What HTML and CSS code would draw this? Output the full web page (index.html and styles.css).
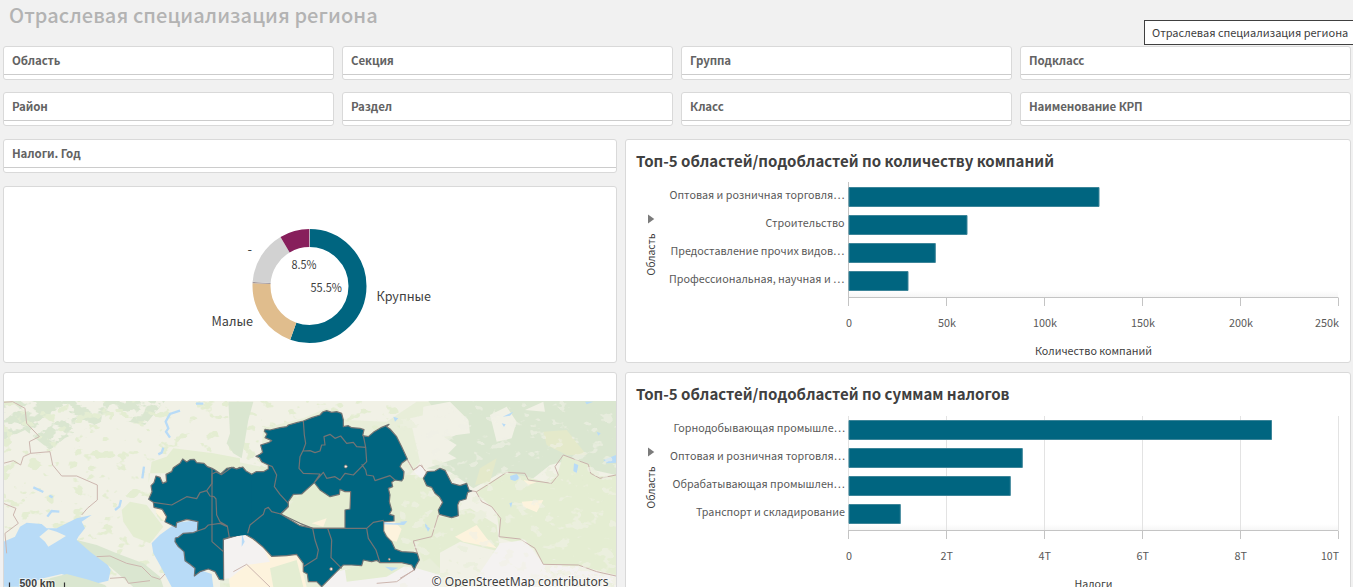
FILE: index.html
```html
<!DOCTYPE html>
<html lang="ru">
<head>
<meta charset="utf-8">
<title>Отраслевая специализация региона</title>
<link rel="stylesheet" href="styles.css">
</head>
<body>
<header class="sheet-header"><h1 class="sheet-title">Отраслевая специализация региона</h1></header>
<div class="tooltip">Отраслевая специализация региона</div>
<main class="sheet">
  <section class="filters">
    <div class="filter"><span class="filter-name">Область</span></div>
    <div class="filter"><span class="filter-name">Секция</span></div>
    <div class="filter"><span class="filter-name">Группа</span></div>
    <div class="filter"><span class="filter-name">Подкласс</span></div>
    <div class="filter"><span class="filter-name">Район</span></div>
    <div class="filter"><span class="filter-name">Раздел</span></div>
    <div class="filter"><span class="filter-name">Класс</span></div>
    <div class="filter"><span class="filter-name">Наименование КРП</span></div>
  </section>
  <section class="board">
    <div class="column-left">
      <div class="filter"><span class="filter-name">Налоги. Год</span></div>
      <div class="card donut-card">
        <svg class="chart" viewBox="4 187 612 175" width="612" height="175">
          <g fill="none" stroke-width="18">
            <circle cx="309.5" cy="286" r="48" stroke="#006580" pathLength="100" stroke-dasharray="55.5 44.5" transform="rotate(-90 309.5 286)"/>
            <circle cx="309.5" cy="286" r="48" stroke="#e0bd8d" pathLength="100" stroke-dasharray="20.3 79.7" stroke-dashoffset="-55.5" transform="rotate(-90 309.5 286)"/>
            <circle cx="309.5" cy="286" r="48" stroke="#a3989b" pathLength="100" stroke-dasharray=".4 99.6" stroke-dashoffset="-75.8" transform="rotate(-90 309.5 286)"/>
            <circle cx="309.5" cy="286" r="48" stroke="#d2d2d2" pathLength="100" stroke-dasharray="15.3 84.7" stroke-dashoffset="-76.2" transform="rotate(-90 309.5 286)"/>
            <circle cx="309.5" cy="286" r="48" stroke="#871f5c" pathLength="100" stroke-dasharray="8.5 91.5" stroke-dashoffset="-91.5" transform="rotate(-90 309.5 286)"/>
          </g>
          <path d="M309.5 229v18" stroke="#d7c9d3" stroke-width=".7"/>
          <g class="slice-value">
            <text x="291.5" y="269" textLength="25" lengthAdjust="spacingAndGlyphs">8.5%</text>
            <text x="310.5" y="292" textLength="31.5" lengthAdjust="spacingAndGlyphs">55.5%</text>
          </g>
          <g class="slice-name">
            <text x="376.5" y="301" textLength="54.5" lengthAdjust="spacingAndGlyphs">Крупные</text>
            <text x="211.5" y="326" textLength="41.5" lengthAdjust="spacingAndGlyphs">Малые</text>
            <text x="247.5" y="254">-</text>
          </g>
        </svg>
      </div>
      <div class="card map-card">
        <svg class="map" viewBox="4 401 612 186" width="612" height="186">
          <defs>
            <filter id="patchy" x="0" y="0" width="100%" height="100%">
              <feTurbulence type="fractalNoise" baseFrequency=".055 .085" numOctaves="4" seed="7"/>
              <feColorMatrix values="0 0 0 0 0 0 0 0 0 0 0 0 0 0 0 16 0 0 0 -7.5"/>
              <feComposite in="SourceGraphic" operator="in"/>
            </filter>
            <filter id="sparse" x="0" y="0" width="100%" height="100%">
              <feTurbulence type="fractalNoise" baseFrequency=".07 .1" numOctaves="3" seed="21"/>
              <feColorMatrix values="0 0 0 0 0 0 0 0 0 0 0 0 0 0 0 16 0 0 0 -9.8"/>
              <feComposite in="SourceGraphic" operator="in"/>
            </filter>
          </defs>
          <rect x="4" y="401" width="612" height="186" fill="#f1f1e6"/>
          <path d="M4 401H165L145 425 110 418 65 438 50 450 25 430 4 440Z" fill="#dae6d0" filter="url(#patchy)"/>
          <path d="M4 401H616V587H4Z" fill="#e4edd2" filter="url(#sparse)"/>
          <g transform="translate(0 370) scale(.33333)">
            <path d="M685 95H760L745 150 735 210 725 265 700 250 680 220 690 190Z" fill="#dae6d0"/>
            <path d="M446 340 455 275 500 260 520 235 640 250 720 265V310H446Z" fill="#e4edd2"/>
            <path d="M365 420 390 395 440 405 490 470 450 520 400 500 370 455Z" fill="#e4edd2"/>
            <path d="M465 412 490 420 503 450 490 452 470 430Z" fill="#fdf3dd"/>
            <path d="M10 515 45 500 60 470 80 458 125 462 140 475 170 475 200 460 230 445 275 435 245 455 255 475 235 500 230 510 270 530 310 560 332 600 325 632 280 643 220 625 185 612 130 625 60 650H10Z" fill="#b8dbf7"/>
            <path d="M118 500 145 478 170 485 198 498 170 515 145 530 135 515Z" fill="#f1f1e6"/>
            <path d="M455 520 480 494 530 458 595 450 595 486 540 500 555 560 600 600 635 612 640 651H515L485 595 460 550Z" fill="#b8dbf7"/>
            <path d="M230 510 290 525 350 550 430 580 480 620 490 651H400L330 590 270 545Z" fill="#dae6d0"/>
            <path d="M150 625 200 612 260 628 315 645 320 651H130Z" fill="#dae6d0"/>
            <path d="M540 122 510 132 497 155 505 175 498 185 510 203M490 233 485 248 475 253M432 290 427 325M363 390 358 410 345 420M100 352 130 366M142 440 155 423 178 425M588 101H610M148 377 158 382" fill="none" stroke="#b8dbf7" stroke-width="7"/>
            <path d="M672 508 720 494 735 580 720 640H660Z" fill="#f4f2f1"/>
            <path d="M10 97 38 95 75 115 80 160 118 200 88 215 92 250 70 260 62 285 40 272 10 280M92 250 150 245 158 285 185 318 230 318 292 345V390L262 415 245 435M10 400 48 415 40 435 55 460 15 490 20 550M290 560 330 558 380 580 425 590 455 620 480 628 495 612M330 625 375 622 385 640 450 632" fill="none" stroke="#ccb6af" stroke-width="3"/>
          </g>
          <g transform="translate(220 395) scale(.33333)">
            <path d="M145 220 110 195 125 160 130 100 250 70 320 40 380 75 500 80 590 20 660 20V50L570 70 600 200 570 240 660 300V576H0V190Z" fill="#e4edd2" opacity=".65"/>
            <path d="M500 275 560 240 660 240V520L600 460 520 470 490 400Z" fill="#e4edd2"/>
            <path d="M180 358 240 300 285 260 395 295 375 400H280Z" fill="#e4edd2"/>
            <path d="M100 425 155 484 235 478 260 576H30L10 430 70 415Z" fill="#fdf3dd"/>
            <path d="M10 430 70 415 130 460 150 500 80 510 30 550 10 552ZM310 576 350 530 430 510 480 505 590 520 660 540V576Z" fill="#f4f2f1"/>
            <path d="M150 520 230 495 250 576H160ZM375 525 450 500 560 510 500 545 380 560Z" fill="#e4edd2"/>
            <path d="M490 380 522 378 545 402 530 440 510 435 492 405ZM275 385 320 370 310 395Z" fill="#fdf3dd"/>
            <path d="M490 382 520 385 560 382 550 390 490 388ZM615 385 630 400 618 405ZM495 515 535 518 515 528ZM66 418 74 440 65 455ZM520 65 535 70 525 80Z" fill="#b8dbf7"/>
            <path d="M560 192 580 225 605 210 620 240M655 360 635 430 580 438 592 475M583 524 530 560 470 565M40 530 80 508 150 576" fill="none" stroke="#ccb6af" stroke-width="3"/>
          </g>
          <g transform="translate(400 395) scale(.33333)">
            <path d="M85 18H648V240L580 225 530 190 450 210 400 250 300 235 220 280 150 230 80 220 170 190 100 150 190 110 120 70Z" fill="#dae6d0"/>
            <path d="M70 35 150 20 205 75 210 115 130 125 170 150 120 200 60 170ZM270 60 320 35 350 80 335 130 290 140ZM375 45 430 20 435 50Z" fill="#f1f1e6"/>
            <path d="M225 290 320 230 440 262 470 245 490 180 570 210 590 245 648 240V540L550 515 430 508 400 460 300 430 290 350Z" fill="#e4edd2"/>
            <path d="M430 110 500 105 560 180 500 180 440 150ZM240 220 290 190 270 260 225 270Z" fill="#e4e9ca"/>
            <path d="M110 370 210 340 290 390 300 470 180 440 70 500 40 430Z" fill="#e4edd2"/>
            <path d="M165 425 230 390 260 430 290 460 190 440ZM370 255 410 262 385 270ZM365 320 430 315 410 352 370 335Z" fill="#fdf3dd"/>
            <path d="M300 470 375 435 430 508 550 515 648 545V576H250Z" fill="#f4f2f1" filter="url(#patchy)"/>
            <path d="M235 540 300 445 375 435 430 510 400 576H250ZM42 230 62 210 85 245 60 248Z" fill="#f4f2f1"/>
            <path d="M330 243 350 237 360 250 345 258 332 254ZM522 205 535 210 530 235 520 228ZM610 195 648 180V203L620 205ZM75 390 90 400 84 410ZM0 380 22 378 12 390ZM90 85 115 70M590 110 602 115 595 122ZM305 85 317 88 312 96ZM328 325 337 322 333 338ZM555 20 580 20 560 28ZM308 65 340 50 330 62ZM348 287 362 292Z" fill="#b8dbf7"/>
            <path d="M20 190 40 225 60 210 80 230M212 287 230 290 270 265 320 232 375 235 385 255 455 265 475 240 465 215 490 180 530 195 565 208 572 235 600 250 648 240M228 290 245 320 275 335 302 370 297 425 360 432 405 460 430 508 535 510 590 530 648 543M115 360 95 425 40 438 52 475M45 524 0 550" fill="none" stroke="#c9b1ab" stroke-width="3"/>
          </g>
          <path d="M400 401H616V587H400Z" fill="#f1f1e6" opacity=".6" filter="url(#sparse)"/>
          <g fill="#006580" stroke="#747474" stroke-width="3.6" stroke-linejoin="round">
            <path transform="translate(0 370) scale(.33333)" stroke="none" d="M660 314 680 295 700 292 708 298 724 292V494L670 508 660 470Z"/>
            <path transform="translate(0 370) scale(.33333)" d="M446 388 456 365 453 347 462 338 468 318 480 322 488 340 500 335 498 313 515 305 520 293 540 280 548 267 560 276 570 269 583 268 590 278 612 280 622 290 636 295 645 300 662 312 680 295 700 292 708 298 720 292V494L670 508 671 630 658 628 645 605 625 597 600 605 583 618 585 595 570 583 555 572 552 545 535 530 525 515 526 504 535 502 550 490 580 488 592 483 594 455 560 448 530 458 528 472 515 465 495 455 500 440 487 418 462 412 460 397Z"/>
            <path transform="translate(220 395) scale(.33333)" fill-rule="evenodd" d="M-24 237-12 231 4 239 20 228 35 217 50 222 68 216 78 228 95 238 108 230 130 230 145 222 145 210 125 200 118 188 108 184 120 178 128 172 122 150 145 143 155 137 135 128 141 117 133 109 135 103 150 105 180 98 200 95 205 90 230 83 250 78 275 68 300 60 308 51 320 47 335 52 350 50 365 55 370 75 370 95 385 92 395 98 420 100 432 104 428 122 445 125 460 112 485 97 507 88 500 95 510 102 530 125 545 155 562 192 545 205 540 215 552 230 550 250 545 258 525 255 515 262 518 275 505 280 510 300 508 320 515 345 508 358 522 362V378L491 380V408L500 425 515 440 525 462 545 470 580 472 592 475 598 495 588 512 583 524 575 510 545 503 480 503 470 496 455 500 430 495 425 512 395 510 370 510 350 530 330 550 305 575 290 560 265 560 262 537 250 530V505L230 478 200 482 155 484 130 457 100 432 70 415 10 432V470L-24 440ZM283 263 300 285 330 305 358 298 360 283 375 290 392 290 390 342 375 345V400H280L240 392 182 357 205 335V320L220 298 245 297Z"/>
            <path transform="translate(400 395) scale(.33333)" d="M70 250 82 230 105 228 120 220 135 226 155 265 180 272 200 265 207 285 215 288 203 292 198 312 178 318 173 330 175 362 155 368 118 358 115 345 128 322 118 305 105 295 95 277 80 272Z"/>
          </g>
          <path transform="translate(0 370) scale(.33333)" fill="#006580" d="M640 330H755V493L692 500 670 470 660 455 650 435Z"/>
          <g fill="none" stroke="#747474" stroke-width="3.6" stroke-linejoin="round">
            <path transform="translate(0 370) scale(.33333)" d="M460 397 515 405 560 380 590 386 600 368 620 362 630 378 642 380 648 387 650 435 660 455 682 468 688 503M636 295V340L620 362M592 483 615 475 625 465 660 460 682 470"/>
            <path transform="translate(220 395) scale(.33333)" d="M250 78 253 120 257 145 250 165 240 185 237 220 250 235 300 237 283 263M250 168 270 167 285 173 300 168 305 150 315 150 312 125 330 118 345 130 362 123 380 145 400 142 410 155 437 157 430 122M437 157 440 200 425 215 400 240 375 235 360 255 345 245 320 250 310 232 283 263M425 208 437 225 440 240 460 243 465 257 510 242 525 255M145 210 157 215 170 240 163 275 180 298 205 325M205 335 182 357 155 350 145 337 135 342 130 358 90 390 83 415M182 357 240 385 278 400H440L460 382 491 376M278 400 285 435 295 465 290 490 250 515M323 400 335 435 333 488 365 520M440 400 445 430 468 465 480 503"/>
          </g>
          <g fill="#f3f3ef" stroke="#877268" stroke-width=".8"><circle cx="345.8" cy="466.5" r="1.5"/><circle cx="331.2" cy="569" r="1.5"/><circle cx="389.3" cy="559.3" r="1"/></g>
          <path d="M9.5 582.5V587M64.5 582.5V587" stroke="#333" stroke-width="1.2"/>
          <g class="map-note">
            <text class="map-scale" x="19.5" y="587" textLength="35.5" lengthAdjust="spacingAndGlyphs">500 km</text>
            <text x="431.5" y="586" textLength="177" lengthAdjust="spacingAndGlyphs">© OpenStreetMap contributors</text>
          </g>
        </svg>
      </div>
    </div>
    <div class="column-right">
      <div class="card">
        <svg class="chart" viewBox="626 140 724 222" width="724" height="222">
          <defs><linearGradient id="fade" x2="0" y2="1"><stop stop-color="#fff"/><stop offset="1" stop-color="#f6f6f6"/></linearGradient></defs>
          <text class="chart-title" x="636" y="167" textLength="418" lengthAdjust="spacingAndGlyphs">Топ-5 областей/подобластей по количеству компаний</text>
          <rect x="849" y="291" width="489" height="6" fill="url(#fade)"/>
          <path class="axis" d="M848.5 182V306M848 297.5H1338.5M946.5 298V306M1044.5 298V306M1142.5 298V306M1240.5 298V306M1338.5 298V306"/>
          <path class="bar" d="M849 187.5h250v19h-250zM849 215.5h118v19h-118zM849 243.5h86.3v19h-86.3zM849 271.5h59v19h-59z"/>
          <g class="label">
            <text x="669.5" y="199" textLength="175" lengthAdjust="spacingAndGlyphs">Оптовая и розничная торговля…</text>
            <text x="765.5" y="227" textLength="79" lengthAdjust="spacingAndGlyphs">Строительство</text>
            <text x="670.5" y="255" textLength="174" lengthAdjust="spacingAndGlyphs">Предоставление прочих видов…</text>
            <text x="669" y="283" textLength="175.5" lengthAdjust="spacingAndGlyphs">Профессиональная, научная и …</text>
            <text x="846" y="327" textLength="6" lengthAdjust="spacingAndGlyphs">0</text>
            <text x="938" y="327" textLength="18" lengthAdjust="spacingAndGlyphs">50k</text>
            <text x="1033" y="327" textLength="24" lengthAdjust="spacingAndGlyphs">100k</text>
            <text x="1131" y="327" textLength="24" lengthAdjust="spacingAndGlyphs">150k</text>
            <text x="1229" y="327" textLength="24" lengthAdjust="spacingAndGlyphs">200k</text>
            <text x="1315" y="327" textLength="24" lengthAdjust="spacingAndGlyphs">250k</text>
          </g>
          <g class="axis-name">
            <text x="1035" y="355" textLength="117" lengthAdjust="spacingAndGlyphs">Количество компаний</text>
            <text transform="translate(655 275.5) rotate(-90)" textLength="42" lengthAdjust="spacingAndGlyphs">Область</text>
          </g>
          <path d="M648 214.5 654.3 219 648 223.5Z" fill="#7b7b7b"/>
        </svg>
      </div>
      <div class="card">
        <svg class="chart" viewBox="626 373 724 214" width="724" height="214">
          <text class="chart-title" x="636" y="400" textLength="373.5" lengthAdjust="spacingAndGlyphs">Топ-5 областей/подобластей по суммам налогов</text>
          <rect x="849" y="524" width="489" height="6" fill="url(#fade)"/>
          <path class="gridline" d="M848.5 416V530M946.5 416V530M1044.5 416V530M1142.5 416V530M1240.5 416V530M1338.5 416V530"/>
          <path class="axis" d="M848 530.5H1338.5M848.5 531V539M946.5 531V539M1044.5 531V539M1142.5 531V539M1240.5 531V539M1338.5 531V539"/>
          <path class="bar" d="M849 420.5h422.5v19h-422.5zM849 448.5h173.3v19h-173.3zM849 476.5h161.3v19h-161.3zM849 504.5h51.3v19h-51.3z"/>
          <g class="label">
            <text x="673.5" y="432" textLength="171.5" lengthAdjust="spacingAndGlyphs">Горнодобывающая промышле…</text>
            <text x="670" y="460" textLength="175" lengthAdjust="spacingAndGlyphs">Оптовая и розничная торговля…</text>
            <text x="672.5" y="488" textLength="172.5" lengthAdjust="spacingAndGlyphs">Обрабатывающая промышлен…</text>
            <text x="696" y="516" textLength="149" lengthAdjust="spacingAndGlyphs">Транспорт и складирование</text>
            <text x="846" y="560" textLength="6" lengthAdjust="spacingAndGlyphs">0</text>
            <text x="940.5" y="560" textLength="12.5" lengthAdjust="spacingAndGlyphs">2T</text>
            <text x="1038.5" y="560" textLength="12.5" lengthAdjust="spacingAndGlyphs">4T</text>
            <text x="1136.5" y="560" textLength="12.5" lengthAdjust="spacingAndGlyphs">6T</text>
            <text x="1234.5" y="560" textLength="12.5" lengthAdjust="spacingAndGlyphs">8T</text>
            <text x="1321" y="560" textLength="18" lengthAdjust="spacingAndGlyphs">10T</text>
          </g>
          <g class="axis-name">
            <text x="1074.5" y="588" textLength="38" lengthAdjust="spacingAndGlyphs">Налоги</text>
            <text transform="translate(655 508.5) rotate(-90)" textLength="42" lengthAdjust="spacingAndGlyphs">Область</text>
          </g>
          <path d="M648 447.5 654.3 452 648 456.5Z" fill="#7b7b7b"/>
        </svg>
      </div>
    </div>
  </section>
</main>
</body>
</html>
```
FILE: styles.css
```css
* { box-sizing: border-box; }
body {
  margin: 0;
  height: 587px;
  overflow: hidden;
  background: #f1f1f1;
  color: #404040;
  font-family: "Noto Sans CJK SC", "Noto Sans", sans-serif;
}
.sheet-header { height: 46px; padding: 0 9px; }
.sheet-title {
  margin: 0;
  font-size: 20px;
  line-height: 30px;
  font-weight: 500;
  letter-spacing: .09px;
  color: #b3b3b3;
  white-space: nowrap;
}
.tooltip {
  position: absolute;
  left: 1144px;
  top: 20px;
  width: 220px;
  height: 25px;
  padding-left: 7px;
  border: 1px solid #404040;
  background: #fff;
  font-size: 11px;
  line-height: 23px;
  letter-spacing: -.03px;
  white-space: nowrap;
}
.sheet { padding: 0 2px 0 3px; }
.filters {
  display: grid;
  grid-template-columns: repeat(4, 331px);
  gap: 12px 8px;
}
.filter, .card {
  border: 1px solid #d9d9d9;
  border-radius: 3px;
  background: #fff;
  overflow: hidden;
}
.filter { height: 34px; }
.filter-name {
  display: block;
  height: 28px;
  padding-left: 8px;
  border-bottom: 1px solid #ccc;
  font-size: 11.5px;
  line-height: 26px;
  letter-spacing: -.1px;
  font-weight: 700;
  color: #636363;
}
.board {
  display: grid;
  grid-template-columns: 614px 726px;
  column-gap: 8px;
  margin-top: 13px;
}
.column-left { display: grid; grid-template-rows: 34px 177px 230px; row-gap: 0; }
.donut-card { margin-top: 13px; height: 177px; }
.map-card { margin-top: 22px; padding-top: 28px; height: 230px; }
.column-right { display: grid; grid-template-rows: 224px 230px; row-gap: 9px; }
.chart, .map { display: block; }
.chart-title { font-size: 15px; font-weight: 600; fill: #404040; }
.label { font-size: 11px; fill: #595959; }
.axis-name { font-size: 11px; fill: #404040; }
.slice-value { font-size: 11.5px; fill: #404040; }
.slice-name { font-size: 13px; fill: #404040; }
.axis { fill: none; stroke: #c4c4c4; stroke-width: 1; }
.gridline { fill: none; stroke: #e3e3e3; stroke-width: 1; }
.bar { fill: #006580; stroke: #3d8599; stroke-width: 1; }
.map-note {
  font-family: "Noto Sans", sans-serif;
  font-size: 12px;
  fill: #404040;
  stroke: #fff;
  stroke-width: 2px;
  stroke-opacity: .6;
  paint-order: stroke;
}
.map-scale { font: bold 11px "Liberation Sans", sans-serif; }
```
